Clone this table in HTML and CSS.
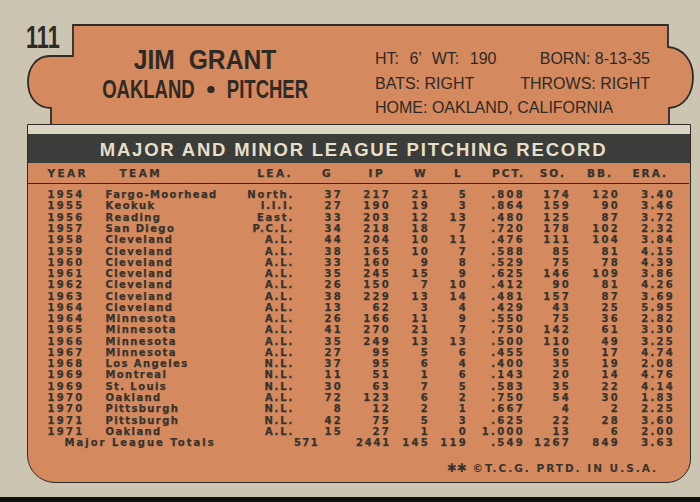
FILE: index.html
```html
<!DOCTYPE html>
<html lang="en">
<head>
<meta charset="utf-8">
<title>Jim Grant - 111</title>
<link rel="stylesheet" href="styles.css">
</head>
<body>
<div class="card">
  <header class="top">
    <svg class="plate" width="700" height="124" viewBox="0 0 700 124" aria-hidden="true">
      <path class="plate-fill" d="M73,25 H668 V47 C684,48 693,62 693,77 C693,94 684,107 669,108 V126 H51 V108 C36,108 28,96 28,82 C28,68 36,56 50,56 H73 Z"/>
      <path class="plate-line" d="M51,126 V108 C36,108 28,96 28,82 C28,68 36,56 50,56 H73 V25 H668 V47 C684,48 693,62 693,77 C693,94 684,107 669,108 V126"/>
    </svg>
    <div class="num"><span>111</span></div>
    <div class="name">
      <span class="player">JIM GRANT</span>
      <span class="team">OAKLAND<i class="dot"></i>PITCHER</span>
    </div>
    <div class="info">
      <span class="ht">HT: 6’ WT: 190</span>
      <span class="r">BORN: 8-13-35</span>
      <span>BATS: RIGHT</span>
      <span class="r">THROWS: RIGHT</span>
      <span class="wide">HOME: OAKLAND, CALIFORNIA</span>
    </div>
  </header>

  <section class="record">
    <div class="strip"></div>
    <h2 class="title">MAJOR AND MINOR LEAGUE PITCHING RECORD</h2>
    <table class="stats">
      <colgroup>
        <col class="c-year"><col class="c-team"><col class="c-lea"><col class="c-g"><col class="c-ip"><col class="c-w"><col class="c-l"><col class="c-pct"><col class="c-so"><col class="c-bb"><col class="c-era"><col>
      </colgroup>
      <thead>
        <tr>
          <th class="h-year">YEAR</th><th class="h-team">TEAM</th><th class="h-lea">LEA.</th><th class="h-g">G</th><th class="h-ip">IP</th><th class="h-w">W</th><th class="h-l">L</th><th class="h-pct">PCT.</th><th class="h-so">SO.</th><th class="h-bb">BB.</th><th class="h-era">ERA.</th><th></th>
        </tr>
      </thead>
      <tbody>
        <tr><td>1954</td><td>Fargo-Moorhead</td><td>North.</td><td>37</td><td>217</td><td>21</td><td>5</td><td>.808</td><td>174</td><td>120</td><td>3.40</td><td></td></tr>
        <tr><td>1955</td><td>Keokuk</td><td>I.I.I.</td><td>27</td><td>190</td><td>19</td><td>3</td><td>.864</td><td>159</td><td>90</td><td>3.46</td><td></td></tr>
        <tr><td>1956</td><td>Reading</td><td>East.</td><td>33</td><td>203</td><td>12</td><td>13</td><td>.480</td><td>125</td><td>87</td><td>3.72</td><td></td></tr>
        <tr><td>1957</td><td>San Diego</td><td>P.C.L.</td><td>34</td><td>218</td><td>18</td><td>7</td><td>.720</td><td>178</td><td>102</td><td>2.32</td><td></td></tr>
        <tr><td>1958</td><td>Cleveland</td><td>A.L.</td><td>44</td><td>204</td><td>10</td><td>11</td><td>.476</td><td>111</td><td>104</td><td>3.84</td><td></td></tr>
        <tr><td>1959</td><td>Cleveland</td><td>A.L.</td><td>38</td><td>165</td><td>10</td><td>7</td><td>.588</td><td>85</td><td>81</td><td>4.15</td><td></td></tr>
        <tr><td>1960</td><td>Cleveland</td><td>A.L.</td><td>33</td><td>160</td><td>9</td><td>8</td><td>.529</td><td>75</td><td>78</td><td>4.39</td><td></td></tr>
        <tr><td>1961</td><td>Cleveland</td><td>A.L.</td><td>35</td><td>245</td><td>15</td><td>9</td><td>.625</td><td>146</td><td>109</td><td>3.86</td><td></td></tr>
        <tr><td>1962</td><td>Cleveland</td><td>A.L.</td><td>26</td><td>150</td><td>7</td><td>10</td><td>.412</td><td>90</td><td>81</td><td>4.26</td><td></td></tr>
        <tr><td>1963</td><td>Cleveland</td><td>A.L.</td><td>38</td><td>229</td><td>13</td><td>14</td><td>.481</td><td>157</td><td>87</td><td>3.69</td><td></td></tr>
        <tr><td>1964</td><td>Cleveland</td><td>A.L.</td><td>13</td><td>62</td><td>3</td><td>4</td><td>.429</td><td>43</td><td>25</td><td>5.95</td><td></td></tr>
        <tr><td>1964</td><td>Minnesota</td><td>A.L.</td><td>26</td><td>166</td><td>11</td><td>9</td><td>.550</td><td>75</td><td>36</td><td>2.82</td><td></td></tr>
        <tr><td>1965</td><td>Minnesota</td><td>A.L.</td><td>41</td><td>270</td><td>21</td><td>7</td><td>.750</td><td>142</td><td>61</td><td>3.30</td><td></td></tr>
        <tr><td>1966</td><td>Minnesota</td><td>A.L.</td><td>35</td><td>249</td><td>13</td><td>13</td><td>.500</td><td>110</td><td>49</td><td>3.25</td><td></td></tr>
        <tr><td>1967</td><td>Minnesota</td><td>A.L.</td><td>27</td><td>95</td><td>5</td><td>6</td><td>.455</td><td>50</td><td>17</td><td>4.74</td><td></td></tr>
        <tr><td>1968</td><td>Los Angeles</td><td>N.L.</td><td>37</td><td>95</td><td>6</td><td>4</td><td>.400</td><td>35</td><td>19</td><td>2.08</td><td></td></tr>
        <tr><td>1969</td><td>Montreal</td><td>N.L.</td><td>11</td><td>51</td><td>1</td><td>6</td><td>.143</td><td>20</td><td>14</td><td>4.76</td><td></td></tr>
        <tr><td>1969</td><td>St. Louis</td><td>N.L.</td><td>30</td><td>63</td><td>7</td><td>5</td><td>.583</td><td>35</td><td>22</td><td>4.14</td><td></td></tr>
        <tr><td>1970</td><td>Oakland</td><td>A.L.</td><td>72</td><td>123</td><td>6</td><td>2</td><td>.750</td><td>54</td><td>30</td><td>1.83</td><td></td></tr>
        <tr><td>1970</td><td>Pittsburgh</td><td>N.L.</td><td>8</td><td>12</td><td>2</td><td>1</td><td>.667</td><td>4</td><td>2</td><td>2.25</td><td></td></tr>
        <tr><td>1971</td><td>Pittsburgh</td><td>N.L.</td><td>42</td><td>75</td><td>5</td><td>3</td><td>.625</td><td>22</td><td>28</td><td>3.60</td><td></td></tr>
        <tr><td>1971</td><td>Oakland</td><td>A.L.</td><td>15</td><td>27</td><td>1</td><td>0</td><td>1.000</td><td>13</td><td>6</td><td>2.00</td><td></td></tr>
        <tr class="totals"><td colspan="3">Major League Totals</td><td>571</td><td>2441</td><td>145</td><td>119</td><td>.549</td><td>1267</td><td>849</td><td>3.63</td><td></td></tr>
      </tbody>
    </table>
    <p class="print"><span class="stars">✱✱</span> ©T.C.G. PRTD. IN U.S.A.</p>
  </section>
</div>
<div class="edge"></div>
</body>
</html>
```

FILE: styles.css
```css
* { box-sizing: border-box; }

html, body {
  margin: 0;
  padding: 0;
}

body {
  width: 700px;
  height: 502px;
  overflow: hidden;
  background: #cbc5b2;
  display: flex;
  flex-direction: column;
  color: #2e2a25;
  font-family: "Liberation Sans", Arial, sans-serif;
}

.card {
  flex: 1;
}

/* ---------- top plate ---------- */
.top {
  position: relative;
  z-index: 0;
  height: 124px;
  display: flex;
}

.plate {
  position: absolute;
  left: 0;
  top: 0;
  z-index: -1;
}

.plate-fill { fill: #d4895e; }
.plate-line { fill: none; stroke: #2f2b27; stroke-width: 1.8; }

.num {
  width: 73px;
  padding: 22px 0 0 26px;
  font-weight: bold;
  font-size: 31px;
  line-height: 31px;
}

.num span {
  display: inline-block;
  transform: scaleX(0.7);
  transform-origin: left center;
}

.name {
  width: 264px;
  padding-top: 46px;
  display: flex;
  flex-direction: column;
  align-items: center;
  font-weight: bold;
}

.player {
  display: inline-block;
  font-size: 28px;
  line-height: 28px;
  word-spacing: 8px;
  transform: scaleX(0.88);
}

.team {
  display: inline-block;
  margin-top: 2.5px;
  font-size: 25px;
  line-height: 25px;
  white-space: nowrap;
  transform: scaleX(0.74);
}

.dot {
  display: inline-block;
  width: 9.5px;
  height: 7px;
  margin: 0 17px;
  border-radius: 50%;
  background: #2e2a25;
  vertical-align: middle;
  position: relative;
  top: -1px;
}

.info {
  margin-left: 38px;
  width: 275px;
  padding-top: 50px;
  display: grid;
  grid-template-columns: auto auto;
  font-size: 16px;
  line-height: 17px;
  white-space: nowrap;
}

.info .r { text-align: right; }
.info .wide { grid-column: 1 / 3; }
.info .ht { word-spacing: 6px; }

/* ---------- record box ---------- */
.record {
  margin-left: 27px;
  width: 664px;
  border: 1.5px solid #2f2b27;
  border-radius: 0 0 24px 28px;
  background: #d4895e;
  padding-bottom: 7.5px;
}

.strip {
  height: 8.5px;
  background: #dcd7c4;
}

.title {
  margin: 0;
  height: 29px;
  padding: 2px 11px 0 0;
  background: #3a3d39;
  color: #e6dfca;
  text-align: center;
  font-family: "Liberation Sans", Arial, sans-serif;
  font-weight: bold;
  font-size: 18.5px;
  line-height: 27px;
  letter-spacing: 1.8px;
  white-space: nowrap;
}

.stats {
  width: 661px;
  table-layout: fixed;
  border-collapse: separate;
  border-spacing: 0;
  font-family: "DejaVu Sans", Verdana, sans-serif;
  font-weight: bold;
  color: #36332d;
  -webkit-text-stroke: 0.25px #36332d;
}

.c-year { width: 77.5px; }
.c-team { width: 136.5px; }
.c-lea  { width: 52px; }
.c-g    { width: 49px; }
.c-ip   { width: 48px; }
.c-w    { width: 39px; }
.c-l    { width: 38px; }
.c-pct  { width: 57px; }
.c-so   { width: 46px; }
.c-bb   { width: 49px; }
.c-era  { width: 55px; }

.stats th {
  padding: 1.5px 0 0;
  font-size: 10.5px;
  line-height: 19px;
  letter-spacing: 2.4px;
  text-align: right;
  border-bottom: 1.5px solid #2f2b27;
  white-space: nowrap;
  font-weight: bold;
}

.stats th.h-year { text-align: left; padding-left: 19.5px; }
.stats th.h-team { text-align: left; padding-left: 14px; }
.stats th.h-lea { padding-right: 1px; }
.stats th.h-g   { padding-right: 10px; }
.stats th.h-ip  { padding-right: 6px; }
.stats th.h-w   { padding-right: 2px; }
.stats th.h-l   { padding-right: 5px; }
.stats th.h-pct { padding-right: 0; letter-spacing: 2px; }
.stats th.h-so  { padding-right: 5px; letter-spacing: 2px; }
.stats th.h-bb  { padding-right: 7px; letter-spacing: 2px; }
.stats th.h-era { padding-right: 7px; letter-spacing: 2px; }

.stats td {
  padding: 0;
  font-size: 10px;
  line-height: 11.27px;
  letter-spacing: 2.3px;
  text-align: right;
  white-space: nowrap;
}

.stats tbody tr:first-child td { padding-top: 5.2px; }

.stats td:nth-child(1) { text-align: left; padding-left: 19.5px; }
.stats td:nth-child(2) { text-align: left; letter-spacing: 1.4px; }
.stats td:nth-child(3) { letter-spacing: 1.8px; }

.stats tr.totals td:first-child {
  padding-left: 36.5px;
  letter-spacing: 2px;
}

.print {
  margin: 14.2px 0 0;
  padding-right: 32px;
  text-align: right;
  font-family: "DejaVu Sans", Verdana, sans-serif;
  font-weight: bold;
  font-size: 10.5px;
  line-height: 12px;
  letter-spacing: 2px;
  color: #36332d;
  white-space: nowrap;
}

.print .stars {
  font-size: 12px;
  letter-spacing: 0;
}

.edge {
  height: 5px;
  background: #111110;
}
```
